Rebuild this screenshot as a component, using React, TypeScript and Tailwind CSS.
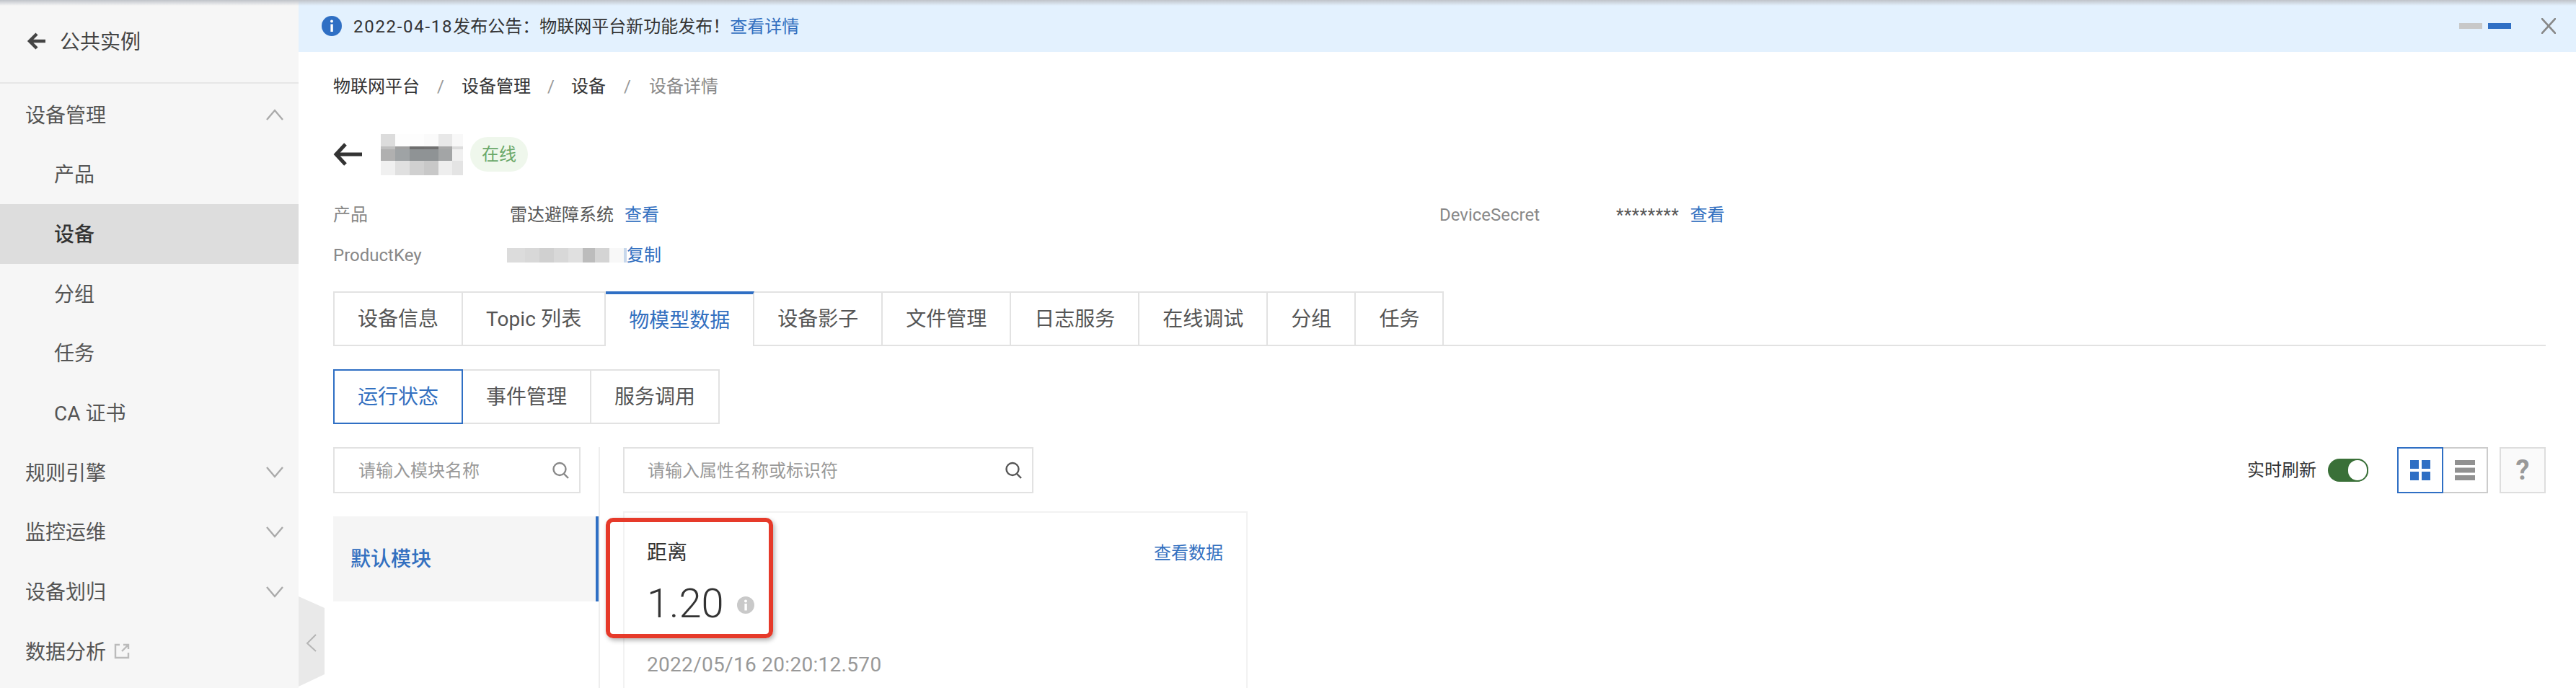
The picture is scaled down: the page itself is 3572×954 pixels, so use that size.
import React from "react";

const Chevron = ({ up = false }: { up?: boolean }) => (
  <svg width="24" height="16" viewBox="0 0 24 16" fill="none" stroke="#aaaaaa" strokeWidth="2.4">
    <polyline points={up ? "1,15 12,2 23,15" : "1,1 12,14 23,1"} />
  </svg>
);

const SearchIcon = ({ color }: { color: string }) => (
  <svg width="24" height="24" viewBox="0 0 24 24" fill="none" stroke={color} strokeWidth="2.4">
    <circle cx="11" cy="10.5" r="8.5" />
    <line x1="17" y1="17" x2="23" y2="23" />
  </svg>
);

const Blur = ({ xs, ys, cells }: { xs: number[]; ys: number[]; cells: string[][] }) => (
  <svg width={xs[xs.length - 1]} height={ys[ys.length - 1]} shapeRendering="crispEdges">
    {cells.map((row, r) =>
      row.map((c, i) => <rect key={`${r}-${i}`} x={xs[i]} y={ys[r]} width={xs[i + 1] - xs[i]} height={ys[r + 1] - ys[r]} fill={c} />),
    )}
  </svg>
);

const side = [
  { t: "设备管理", chev: "up", lvl: 0 },
  { t: "产品", lvl: 1 },
  { t: "设备", lvl: 1, active: true },
  { t: "分组", lvl: 1 },
  { t: "任务", lvl: 1 },
  { t: "CA 证书", lvl: 1 },
  { t: "规则引擎", chev: "down", lvl: 0 },
  { t: "监控运维", chev: "down", lvl: 0 },
  { t: "设备划归", chev: "down", lvl: 0 },
  { t: "数据分析", ext: true, lvl: 0 },
];

const tabs = ["设备信息", "Topic 列表", "物模型数据", "设备影子", "文件管理", "日志服务", "在线调试", "分组", "任务"];

export default function App() {
  return (
    <div className="relative flex w-[3572px] h-[954px] overflow-hidden bg-white [font-family:Roboto,'Noto_Sans_CJK_SC',sans-serif]">
      <aside className="relative w-[414px] shrink-0 bg-[#f6f6f6] text-[#555] text-[28px]">
        <div className="flex items-center h-[116px] border-b-2 border-[#e6e6e6] pl-[37px] text-[#444]">
          <svg width="26" height="24" viewBox="0 0 26 24" fill="none" stroke="#444" strokeWidth="4.4">
            <path d="M14 2 L4 12 L14 22 M4 12 H26" />
          </svg>
          <span className="ml-[20px] pt-[3px]">公共实例</span>
        </div>
        <nav className="pt-[2px]">
          {side.map((s) => (
            <div
              key={s.t}
              className={`flex items-center h-[82.67px] pr-[21px] ${s.lvl ? "pl-[75px]" : "pl-[35px]"} ${s.active ? "bg-[#dddddd] text-[#333] font-medium" : ""}`}
            >
              <span className="pt-[3px]">{s.t}</span>
              {s.chev && (
                <span className="ml-auto flex">
                  <Chevron up={s.chev === "up"} />
                </span>
              )}
              {s.ext && (
                <svg className="ml-[11px]" width="22" height="22" viewBox="0 0 22 22" fill="none" stroke="#bbbbbb" strokeWidth="2.4">
                  <path d="M8 2 H2 V20 H20 V13 M13 2 H20 V8 M20 2 L11 11" />
                </svg>
              )}
            </div>
          ))}
        </nav>
        <svg className="absolute left-[414px] top-[827px]" width="36" height="125" viewBox="0 0 36 125">
          <polygon points="0,0 36,16 36,108 0,125" fill="#e9e9e9" />
          <polyline points="24,53 12,65 24,76" fill="none" stroke="#b5b5b5" strokeWidth="2" />
        </svg>
      </aside>

      <main className="flex-1 min-w-0 flex flex-col">
        <div className="flex items-center h-[72px] shrink-0 bg-[#e3f1fe] pl-[32px] pr-[28px] text-[24px] text-[#333]">
          <svg width="28" height="28" viewBox="0 0 28 28">
            <circle cx="14" cy="14" r="14" fill="#2f6fc4" />
            <circle cx="14" cy="7.5" r="2" fill="#fff" />
            <rect x="12.4" y="11.5" width="3.4" height="10.5" fill="#fff" />
          </svg>
          <span className="ml-[16px] pt-[1px]">
            <span className="tracking-[1.7px]">2022-04-18</span>发布公告：物联网平台新功能发布！
          </span>
          <span className="pt-[1px] text-[#3370c0]">查看详情</span>
          <div className="ml-auto flex items-center">
            <span className="w-[32px] h-[8px] bg-[#c8c8c8]" />
            <span className="ml-[8px] w-[32px] h-[8px] bg-[#2f6fc4]" />
            <svg className="ml-[42px]" width="20" height="22" viewBox="0 0 20 22" stroke="#888" strokeWidth="2.6">
              <path d="M0 0 L20 22 M20 0 L0 22" />
            </svg>
          </div>
        </div>

        <div className="flex flex-col pl-[48px] pr-[42px]">
          <div className="flex items-center h-[34px] mt-[31px] text-[24px] text-[#333]">
            <span>物联网平台</span>
            <span className="w-[58px] text-center text-[#999]">/</span>
            <span>设备管理</span>
            <span className="w-[56px] text-center text-[#999]">/</span>
            <span>设备</span>
            <span className="w-[60px] text-center text-[#999]">/</span>
            <span className="text-[#888]">设备详情</span>
          </div>

          <div className="flex items-center h-[58px] mt-[48px]">
            <svg width="40" height="32" viewBox="0 0 40 32" fill="none" stroke="#333" strokeWidth="5">
              <path d="M17 2 L4 16 L17 30 M4 16 H40" />
            </svg>
            <span className="ml-[26px] flex">
              <Blur
                xs={[0, 20, 40, 60, 80, 99, 114]}
                ys={[0, 17, 21, 37, 57]}
                cells={[
                  ["#dcdcdc", "#fdfdfd", "#fdfdfd", "#fafafa", "#e8e8e8", "#f8f8f8"],
                  ["#c0c0c0", "#a0a0a0", "#6e6e6e", "#707070", "#a8a8a8", "#dcdcdc"],
                  ["#b0b0b0", "#9fa3a5", "#8f9395", "#8f9395", "#a3a5a6", "#f0f0f0"],
                  ["#f0f0f0", "#e0e0e0", "#d0d0d0", "#c8c8c8", "#eeeeee", "#e4e4e4"],
                ]}
              />
            </span>
            <span className="ml-[10px] h-[48px] w-[80px] flex items-center justify-center rounded-full bg-[#eff7ec] text-[24px] text-[#6aa869]">在线</span>
          </div>

          <div className="grid grid-cols-[245px_1289px_245px_auto] mt-[26px] text-[24px] text-[#555]">
            <div className="flex items-center h-[56px] pt-[2px] text-[#888]">产品</div>
            <div className="flex items-center pt-[2px]">
              雷达避障系统<span className="ml-[15px] text-[#3370c0]">查看</span>
            </div>
            <div className="flex items-center pt-[2px] text-[#888]">DeviceSecret</div>
            <div className="flex items-center pt-[2px]">
              <span className="tracking-[0.6px]">********</span>
              <span className="ml-[15px] text-[#3370c0]">查看</span>
            </div>
            <div className="flex items-center h-[56px] pt-[2px] text-[#888]">ProductKey</div>
            <div className="flex items-center pt-[2px] -ml-[4px]">
              <span className="flex">
                <Blur
                  xs={[0, 25, 45, 65, 85, 105, 122, 142, 162, 166]}
                  ys={[0, 20]}
                  cells={[["#dcdcdc", "#d8d8d8", "#d0d0d0", "#d8d8d8", "#e0e0e0", "#bcbcbc", "#d4d4d4", "#f8f8f8", "#c8d8ec"]]}
                />
              </span>
              <span className="text-[#3370c0]">复制</span>
            </div>
          </div>

          <div className="flex h-[76px] mt-[23px] border-b-2 border-[#e2e2e2] text-[28px] text-[#555]">
            {tabs.map((t, i) => {
              const on = t === "物模型数据";
              return (
                <div
                  key={t}
                  className={`flex items-center pt-[2px] px-[32px] h-[76px] border-r-2 ${i === 0 ? "border-l-2" : ""} ${t === "Topic 列表" ? "tracking-[0.1px]" : ""} ${
                    on ? "border-t-4 border-t-[#2f6fc4] border-r-[#e2e2e2] bg-white text-[#3370c0]" : "border-t-2 border-[#e2e2e2] border-b-2"
                  }`}
                >
                  {t}
                </div>
              );
            })}
          </div>

          <div className="flex h-[76px] mt-[32px] text-[28px] text-[#555]">
            <div className="flex items-center pt-[2px] px-[32px] border-2 border-[#2f6fc4] text-[#3370c0]">运行状态</div>
            <div className="flex items-center pt-[2px] px-[32px] border-y-2 border-r-2 border-[#e2e2e2]">事件管理</div>
            <div className="flex items-center pt-[2px] px-[32px] border-y-2 border-r-2 border-[#e2e2e2]">服务调用</div>
          </div>

          <div className="flex mt-[32px]">
            <div className="w-[368px] shrink-0">
              <div className="flex items-center w-[343px] h-[64px] border-2 border-[#e2e2e2] pl-[33px] pr-[14px] text-[24px] text-[#999]">
                <span className="pt-[2px]">请输入模块名称</span>
                <span className="ml-auto flex">
                  <SearchIcon color="#888" />
                </span>
              </div>
              <div className="flex items-center h-[118px] mt-[32px] pl-[24px] pt-[2px] bg-[#f5f5f5] border-r-4 border-[#2f6fc4] text-[28px] font-medium text-[#3370c0]">
                默认模块
              </div>
            </div>
            <div className="flex-1 min-w-0 h-[400px] border-l-2 border-[#eeeeee] pl-[32px]">
              <div className="flex items-center h-[64px]">
                <div className="flex items-center w-[569px] h-[64px] border-2 border-[#e2e2e2] pl-[32px] pr-[14px] text-[24px] text-[#999]">
                  <span className="pt-[2px]">请输入属性名称或标识符</span>
                  <span className="ml-auto flex">
                    <SearchIcon color="#555" />
                  </span>
                </div>
                <span className="ml-auto text-[24px] text-[#333]">实时刷新</span>
                <span className="relative ml-[16px] w-[56px] h-[32px] rounded-full bg-[#3a7038]">
                  <span className="absolute right-0 top-0 w-[30px] h-[32px] rounded-full bg-white border-2 border-[#3a7038]" />
                </span>
                <div className="ml-[40px] flex items-center justify-center w-[64px] h-[64px] border-2 border-[#2f6fc4]">
                  <svg width="28" height="28" viewBox="0 0 28 28" fill="#2f6fc4">
                    <rect width="12" height="12" />
                    <rect x="16" width="12" height="12" />
                    <rect y="16" width="12" height="12" />
                    <rect x="16" y="16" width="12" height="12" />
                  </svg>
                </div>
                <div className="flex items-center justify-center w-[62px] h-[64px] border-y-2 border-r-2 border-[#cccccc]">
                  <svg width="28" height="28" viewBox="0 0 28 28" fill="#919191">
                    <rect width="28" height="7" />
                    <rect y="10.5" width="28" height="7" />
                    <rect y="21" width="28" height="7" />
                  </svg>
                </div>
                <div className="ml-[16px] flex items-center justify-center w-[64px] h-[64px] border-2 border-[#dedede] bg-[#fafafa] text-[38px] font-bold text-[#999]">?</div>
              </div>

              <div className="relative w-[866px] h-[300px] mt-[25px] border-2 border-[#f2f2f2]">
                <div className="flex items-center justify-between h-[106px] pl-[31px] pr-[32px] pt-[5px]">
                  <span className="text-[28px] text-[#333]">距离</span>
                  <span className="text-[24px] text-[#3370c0]">查看数据</span>
                </div>
                <div className="flex items-center h-[36px] pt-[4px] pl-[31px]">
                  <span className="text-[56px] leading-none font-light text-[#333]">1.20</span>
                  <svg className="ml-[18px] mt-[4px]" width="24" height="24" viewBox="0 0 24 24">
                    <circle cx="12" cy="12" r="12" fill="#c9c9c9" />
                    <circle cx="12" cy="6.5" r="2" fill="#fff" />
                    <rect x="10.4" y="10" width="3.4" height="9.5" fill="#fff" />
                  </svg>
                </div>
                <div className="pl-[31px] mt-[49px] text-[28px] leading-[40px] tracking-[0.3px] text-[#999]">2022/05/16 20:20:12.570</div>
                <div className="absolute left-[-26px] top-[7px] w-[232px] h-[167px] rounded-[10px] border-[6px] border-[#e63a2a] shadow-[2px_3px_6px_rgba(0,0,0,0.3)]" />
              </div>
            </div>
          </div>
        </div>
      </main>

      <div className="absolute left-0 right-0 top-0 h-[8px] bg-gradient-to-b from-[#bfc3c9] to-transparent" />
    </div>
  );
}
